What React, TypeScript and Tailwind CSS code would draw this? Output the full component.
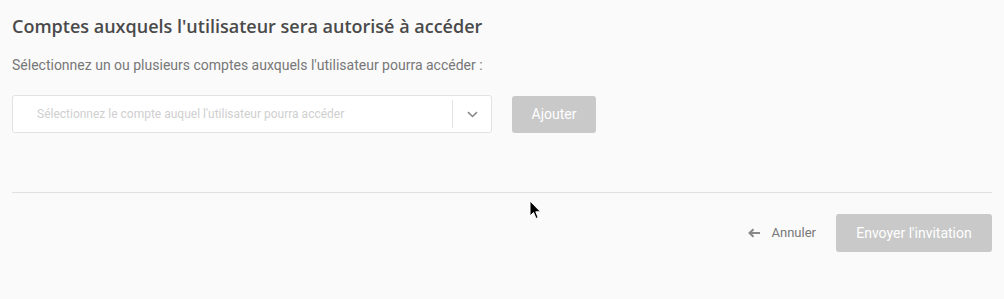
export default function App() {
  return (
    <div className="relative w-[1004px] h-[299px] bg-[#fafafa] font-['Roboto',sans-serif] overflow-hidden">
      <div className="px-3 pt-[14px]">
        <h1 className="font-['Open_Sans',sans-serif] font-semibold text-[18px] leading-[25px] text-[#4a4a4a]">
          Comptes auxquels l'utilisateur sera autorisé à accéder
        </h1>
        <p className="mt-[16px] text-[14px] leading-[20px] text-[#777]">
          Sélectionnez un ou plusieurs comptes auxquels l'utilisateur pourra accéder :
        </p>

        <div className="mt-[20px] flex items-center gap-5">
          <div className="flex items-center w-[480px] h-[38px] bg-white border border-[#e2e2e2] rounded-[3px]">
            <span className="flex-1 pl-6 text-[12px] text-[#cfcfcf] truncate">
              Sélectionnez le compte auquel l'utilisateur pourra accéder
            </span>
            <span className="w-px h-[28px] bg-[#e2e2e2]" />
            <span className="w-[38px] flex justify-center">
              <svg width="11" height="7" viewBox="0 0 11 7" fill="none">
                <path d="M1 1.2 L5.5 5.5 L10 1.2" stroke="#8a8a8a" strokeWidth="1.6" />
              </svg>
            </span>
          </div>
          <button className="w-[84px] h-[37px] rounded-[3px] bg-[#c9c9c9] text-white text-[14px]">
            Ajouter
          </button>
        </div>

        <div className="mt-[59px] w-[980px] h-px bg-[#e0e0e0]" />

        <div className="mt-[21px] w-[980px] flex items-center justify-end">
          <button className="flex items-center gap-3 text-[13px] text-[#777] mr-5">
            <svg width="12" height="10" viewBox="0 0 12 10" fill="none">
              <path d="M12 5 H2 M5.5 1.2 L1.5 5 L5.5 8.8" stroke="#888" strokeWidth="2" />
            </svg>
            Annuler
          </button>
          <button className="w-[156px] h-[38px] rounded-[3px] bg-[#c9c9c9] text-white text-[14px]">
            Envoyer l'invitation
          </button>
        </div>
      </div>

      <svg className="absolute left-[529px] top-[200px]" width="13" height="20" viewBox="0 0 13 20">
        <path d="M1 1 L1 16 L4.5 12.5 L7 18.5 L9.2 17.6 L6.8 11.8 L11.5 11.8 Z" fill="#000" stroke="#fff" strokeWidth="1" />
      </svg>
    </div>
  );
}
